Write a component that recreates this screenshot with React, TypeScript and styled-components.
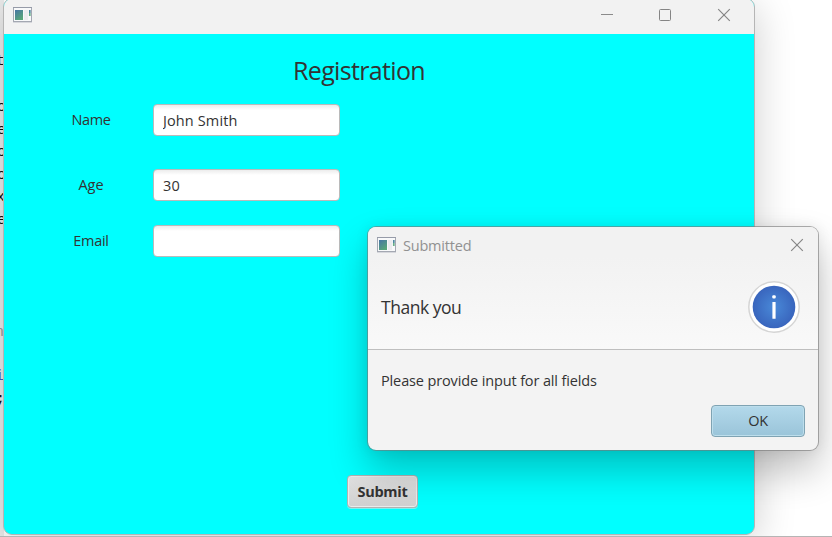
import React from "react";
import styled, { createGlobalStyle } from "styled-components";

const GlobalStyle = createGlobalStyle`
  * { box-sizing: border-box; }
  body { margin: 0; overflow: hidden; background: #fff; }
  input, button { font: inherit; color: inherit; }
`;

const Desktop = styled.div`
  position: relative;
  width: 832px;
  height: 537px;
  overflow: hidden;
  background: #fff;
  border-bottom: 1px solid #b5b5b5;
  font-family: "Open Sans", "Noto Sans", sans-serif;
  font-size: 14.5px;
  color: #333;
`;

const EditorStrip = styled.div`
  width: 4px;
  height: 537px;
  overflow: hidden;
  background: #ececec;
  display: grid;
  grid-template-rows: 51px 46px 23px 22px 23px 22px 23px 112px 44px 23px 1fr;
  font-family: "Liberation Mono", monospace;
  font-size: 15px;
`;

const CodeGlyph = styled.span<{ $color: string; $shift?: number }>`
  align-self: start;
  height: 22px;
  line-height: 22px;
  margin-left: ${(p) => p.$shift ?? -3}px;
  color: ${(p) => p.$color};
`;

const Window = styled.section`
  position: absolute;
  left: 3px;
  top: -2px;
  width: 752px;
  height: 537px;
  border: 1px solid #b5b5b5;
  border-radius: 9px;
  overflow: hidden;
  background: cyan;
  display: flex;
  flex-direction: column;
`;

const WindowShadow = styled.div`
  position: absolute;
  left: 3px;
  top: -2px;
  width: 752px;
  height: 537px;
  border-radius: 9px;
  box-shadow: 0 8px 42px rgba(0, 0, 0, 0.2);
`;

const TitleBar = styled.header`
  display: flex;
  align-items: center;
  flex: none;
  height: 35px;
  padding: 0 24px 3px 9px;
  background: #f2f2f2;
`;

const Controls = styled.div`
  display: flex;
  gap: 46px;
  margin-left: auto;
  svg { display: block; overflow: visible; }
`;

const Heading = styled.h1`
  margin: 17px 0 0 289px;
  height: 38px;
  line-height: 38px;
  font-size: 25px;
  font-weight: 400;
  letter-spacing: -0.66px;
  white-space: nowrap;
`;

const Form = styled.form`
  display: grid;
  grid-template-columns: 80px 187px;
  grid-template-rows: 32px 65px 56px;
  column-gap: 22px;
  margin: 15px 0 0 47px;
`;

const Field = styled.label`
  display: grid;
  grid-template-columns: subgrid;
  grid-column: 1 / -1;
  align-items: center;
  align-self: end;
  height: 32px;
`;

const FieldName = styled.span<{ $tracking: number }>`
  text-align: center;
  line-height: 20px;
  letter-spacing: ${(p) => p.$tracking}px;
`;

const TextInput = styled.input`
  width: 187px;
  height: 32px;
  padding: 0 9px;
  border: 1px solid #bababa;
  border-radius: 4px;
  outline: none;
  background: linear-gradient(#ececec, #fff 5px);
  letter-spacing: 0.12px;
`;

const SubmitButton = styled.button`
  flex: none;
  width: 71px;
  height: 33px;
  margin: auto 0 26px 343px;
  padding: 0;
  border: 1px solid #b2b2b2;
  border-radius: 4px;
  background: linear-gradient(#e2e2e2, #d0d0d0);
  box-shadow: inset 0 0 0 1px #ebebeb, 0 1px 0 #80efef;
  font-weight: 700;
  letter-spacing: -0.3px;
`;

const Dialog = styled.section`
  position: absolute;
  left: 367px;
  top: 226px;
  width: 452px;
  height: 225px;
  border: 1px solid rgba(120, 120, 120, 0.6);
  border-radius: 9px;
  background: #f3f3f3;
  background-clip: padding-box;
  box-shadow: 0 20px 38px rgba(0, 0, 0, 0.24), 0 0 14px rgba(0, 0, 0, 0.07);
  display: flex;
  flex-direction: column;
`;

const DialogTop = styled.div`
  height: 123px;
  border-bottom: 1px solid #bfbfbf;
  border-radius: 8px 8px 0 0;
  background: linear-gradient(#f2f2f2 25%, #f9f9f9);
`;

const DialogTitleBar = styled.div`
  display: flex;
  align-items: center;
  height: 36px;
  padding: 0 15px 0 9px;
`;

const DialogTitle = styled.span`
  margin: 0 0 0 6px;
  color: #919191;
  letter-spacing: -0.2px;
`;

const DialogHeader = styled.div`
  display: flex;
  align-items: center;
  justify-content: space-between;
  height: 87px;
  padding: 0 17px 0 13px;
  font-size: 17.5px;
  letter-spacing: -0.48px;
  svg { display: block; margin-top: 1px; }
`;

const Message = styled.p`
  margin: 21px 0 0 13px;
  line-height: 20px;
  letter-spacing: -0.13px;
`;

const OkButton = styled.button`
  align-self: flex-end;
  width: 94px;
  height: 32px;
  margin: 14px 13px 0 0;
  padding: 0 0 1px;
  border: 1px solid #7fa3b3;
  border-radius: 4px;
  background: linear-gradient(#b3d9eb, #9ac4d9);
  box-shadow: inset 0 0 0 1px #bddeec;
  letter-spacing: -0.4px;
`;

const AppIcon = () => (
  <svg width="20" height="16" viewBox="0 0 20 16">
    <defs>
      <linearGradient id="screen" x1="0" y1="0" x2="0.6" y2="1">
        <stop offset="0" stopColor="#4775a5" />
        <stop offset="1" stopColor="#57a679" />
      </linearGradient>
    </defs>
    <rect x="0.5" y="0.5" width="18" height="14" fill="#f8f9fa" stroke="#a4a8b2" />
    <path d="M0 .5H19" stroke="#969ba8" />
    <path d="M0 15.5H19" stroke="#d6d7dc" />
    <rect x="2" y="3" width="8" height="10" fill="url(#screen)" />
    <rect x="11" y="3" width="4" height="10" fill="#ececef" />
    <path d="M16.8 3V6" stroke="#4d87a1" strokeWidth="1.7" />
    <path d="M16.8 6V9" stroke="#67ad87" strokeWidth="1.7" />
  </svg>
);

const MinimizeIcon = () => (
  <svg width="12" height="12"><path d="M0 5.5H12" stroke="#8b8b8b" /></svg>
);

const MaximizeIcon = () => (
  <svg width="12" height="12">
    <rect x="0.5" y="0.5" width="11" height="11" rx="1" fill="none" stroke="#858585" />
  </svg>
);

const CloseIcon = () => (
  <svg width="13" height="12"><path d="M1.2 .2L12.8 11.8M12.8 .2L1.2 11.8" stroke="#858585" strokeWidth="1.15" /></svg>
);

const InfoIcon = () => (
  <svg width="54" height="54" viewBox="0 0 54 54">
    <defs>
      <radialGradient id="info">
        <stop offset="0" stopColor="#4989d8" />
        <stop offset="1" stopColor="#3965bd" />
      </radialGradient>
    </defs>
    <circle cx="27" cy="27" r="25.2" fill="#fff" stroke="#d5d5d5" strokeWidth="1.5" />
    <circle cx="27" cy="27" r="21.3" fill="url(#info)" />
    <rect x="25.3" y="15.3" width="3.4" height="3.2" rx="1" fill="#fff" />
    <rect x="25.4" y="22" width="3.2" height="16.8" rx=".5" fill="#fff" />
  </svg>
);

const glyphs = [
  { text: "t", color: "#111", shift: -4 },
  { text: "o", color: "#111" },
  { text: "e", color: "#111" },
  { text: "o", color: "#111" },
  { text: "o", color: "#111" },
  { text: "x", color: "#111", shift: -4 },
  { text: "e", color: "#111" },
  { text: "n", color: "#999", shift: -5 },
  { text: "i", color: "#3a64c8", shift: -5 },
  { text: ";", color: "#111", shift: -4 },
];

const fields = [
  { label: "Name", value: "John Smith", tracking: -0.4 },
  { label: "Age", value: "30", tracking: 0 },
  { label: "Email", value: "", tracking: -0.3 },
];

export default function App() {
  return (
    <>
      <GlobalStyle />
      <Desktop>
        <EditorStrip>
          <span />
          {glyphs.map((g, i) => (
            <CodeGlyph key={i} $color={g.color} $shift={g.shift}>{g.text}</CodeGlyph>
          ))}
        </EditorStrip>
        <WindowShadow />
        <Window>
          <TitleBar>
            <AppIcon />
            <Controls><MinimizeIcon /><MaximizeIcon /><CloseIcon /></Controls>
          </TitleBar>
          <Heading>Registration</Heading>
          <Form>
            {fields.map((f) => (
              <Field key={f.label}>
                <FieldName $tracking={f.tracking}>{f.label}</FieldName>
                <TextInput defaultValue={f.value} />
              </Field>
            ))}
          </Form>
          <SubmitButton>Submit</SubmitButton>
        </Window>
        <Dialog role="dialog">
          <DialogTop>
            <DialogTitleBar>
              <AppIcon />
              <DialogTitle>Submitted</DialogTitle>
              <Controls><CloseIcon /></Controls>
            </DialogTitleBar>
            <DialogHeader>
              <span>Thank you</span>
              <InfoIcon />
            </DialogHeader>
          </DialogTop>
          <Message>Please provide input for all fields</Message>
          <OkButton>OK</OkButton>
        </Dialog>
      </Desktop>
    </>
  );
}
